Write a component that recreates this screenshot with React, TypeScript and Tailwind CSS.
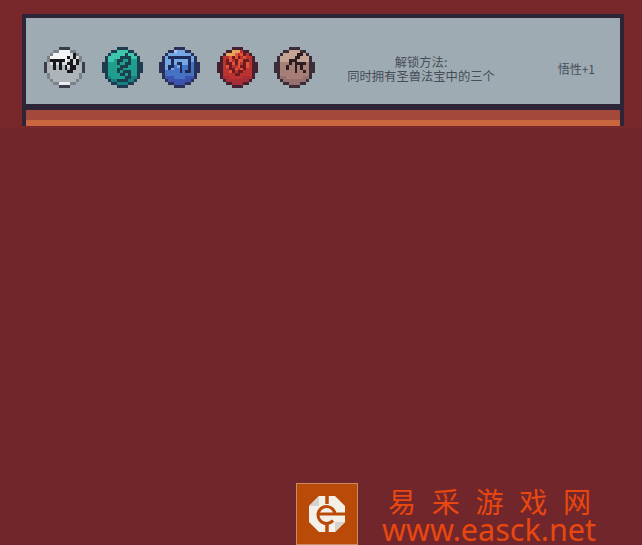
type Palette = Record<string, string>;

// 14x14 pixel maps for the five relic coins
const coins: { rows: string[]; colors: Palette }[] = [
  {
    colors: { D: '#3a3d4a', C: '#7b828a', H: '#f4f5f5', B: '#d5d9db', S: '#aeb5ba', G: '#17171c', L: '#eceeef' },
    rows: [
      '.....DDDD.....',
      '...CCHHHHCC...',
      '..CHHHHHHBGC..',
      '.CHHHHHHGBGBC.',
      '.CGGGGGHBGBGC.',
      'DSBGBGBBGGBGSD',
      'DSSGSGSGBGGSSD',
      'DSSGSGSGSGGSSD',
      'DSSSSSSSGGSSSD',
      '.CSSSSSSSSSSC.',
      '.CSSSSSSSSSSC.',
      '..CSSSSSSSSC..',
      '...CCLLLLCC...',
      '.....DDDD.....',
    ],
  },
  {
    colors: { D: '#1e3b50', H: '#3fc7ae', B: '#1f9e8e', S: '#187f80', G: '#1b3f4d' },
    rows: [
      '.....DDDD.....',
      '...DDHHHHDD...',
      '..DHHHHHGHHD..',
      '.DHHHHGGGGHHD.',
      '.DHHBGGBBGBBD.',
      'DDBBBGBBGGBBDD',
      'DDBBBBGGGBBBDD',
      'DDBBBGGBBBBBDD',
      'DDBBBGBGGGBBDD',
      '.DBBBBGGBGBBD.',
      '.DSBBBBBGGSSD.',
      '..DSSGGGGSSD..',
      '...DDSSSSDD...',
      '.....DDDD.....',
    ],
  },
  {
    colors: { D: '#2b3058', H: '#74a8e2', B: '#4672c4', S: '#3b53ae', G: '#1e2b58', L: '#a8c8ec' },
    rows: [
      '.....DDDD.....',
      '...DDLHHHDD...',
      '..DHHHHHHHHD..',
      '.DHGGGGGGGGHD.',
      '.DHHGHHHHHGHD.',
      'DDHHGHGGHHGBDD',
      'DDHGGBHGBBGBDD',
      'DDHGHBBGBBGBDD',
      'DDBBBBBGBGGBDD',
      '.DBBBBBBBBBBD.',
      '.DSSSBBBBSSSD.',
      '..DSSSSSSSSD..',
      '...DDSSSSDD...',
      '.....DDDD.....',
    ],
  },
  {
    colors: { D: '#45202e', H: '#e8a45a', B: '#bb3330', S: '#a82c36', G: '#701a22', L: '#e2553b' },
    rows: [
      '.....DDDD.....',
      '...DDHHHBDD...',
      '..DHHHLBLGBD..',
      '.DBBLGLGBLBBD.',
      '.DBGLBGLLGGBD.',
      'DDBGGLGLBGLBDD',
      'DDBLGBBLGGLBDD',
      'DDBBGGLBLGBBDD',
      'DDBBLGBGGBBBDD',
      '.DBBBBGGBBBBD.',
      '.DSSBBBBBSSSD.',
      '..DSSSSSSSSD..',
      '...DDSSSSDD...',
      '.....DDDD.....',
    ],
  },
  {
    colors: { D: '#3a2c38', H: '#c4a393', B: '#a87f76', S: '#96706e', G: '#2b1c20' },
    rows: [
      '.....DDDD.....',
      '...DDHHHHDD...',
      '..DHHHHHGGHD..',
      '.DHHHHHGGHHHD.',
      '.DHHHGGGHHHHD.',
      'DDBBBGBGGGGBDD',
      'DDBBGBBGBGBBDD',
      'DDBBGBBGBGBBDD',
      'DDBBBBBGBBGBDD',
      '.DBBBBBBBBBBD.',
      '.DSSBBBBBBSSD.',
      '..DSSSSSSSSD..',
      '...DDSSSSDD...',
      '.....DDDD.....',
    ],
  },
];

function Coin({ rows, colors }: { rows: string[]; colors: Palette }) {
  return (
    <svg width="41" height="41" viewBox="0 0 14 14" shapeRendering="crispEdges" className="shrink-0 blur-[0.5px]">
      {rows.map((row, y) =>
        row.split('').map((c, x) =>
          c === '.' ? null : <rect key={`${x}-${y}`} x={x} y={y} width="1" height="1" fill={colors[c]} />,
        ),
      )}
    </svg>
  );
}

function SiteLogo() {
  return (
    <svg width="38" height="38" viewBox="0 0 38 38">
      <path d="M11 1 H27 L37 11 V27 L27 37 H11 L1 27 V11 Z" fill="#f3efe9" />
      <path d="M1 11 L11 1 V11 Z M37 27 L27 37 V27 Z" fill="#d6d2cc" />
      <path d="M19 0 V9 M19 29 V38" stroke="#b94a08" strokeWidth="3.5" />
      <path d="M10 19 H38" stroke="#b94a08" strokeWidth="3" />
      <path d="M27 19 A8.5 8.5 0 1 0 25 25.5" fill="none" stroke="#b94a08" strokeWidth="3" />
    </svg>
  );
}

export default function App() {
  return (
    <div
      className="relative h-[545px] w-[642px] overflow-hidden bg-[#70262b]"
      style={{ fontFamily: '"Noto Sans CJK SC", "Liberation Sans", sans-serif' }}
    >
      <div className="h-[128px] bg-[#78282b] pl-[22px] pt-[14px]">
        <div className="flex h-[112px] w-[602px] flex-col bg-[#2d2438] px-[4px] pt-[4px]">
          <div className="flex h-[86px] shrink-0 items-center bg-[#9fabb3] pl-[18px] pr-[25px] pt-[13px]">
            <div className="flex gap-[16.5px]">
              {coins.map((coin, i) => (
                <Coin key={i} rows={coin.rows} colors={coin.colors} />
              ))}
            </div>
            <div className="ml-[32px] mt-[3px] w-[148px] text-center text-[12.3px] leading-[14px] text-[#454d56]">
              <p>解锁方法:</p>
              <p className="whitespace-nowrap">同时拥有圣兽法宝中的三个</p>
            </div>
            <div className="ml-auto mt-[3px] text-[12px] leading-[14px] text-[#454d56]">悟性+1</div>
          </div>
          <div className="mt-[6px] h-[10px] shrink-0 bg-[#a4483c]" />
          <div className="h-[6px] shrink-0 bg-[#c9663f]" />
        </div>
      </div>

      <div className="absolute left-[296px] top-[483px] flex h-[62px] w-[62px] items-center justify-center border border-[#c98a66] bg-[#b94a08]">
        <SiteLogo />
      </div>
      <div className="absolute left-[382px] top-[484px] w-[216px] text-[#e8480f]">
        <p className="whitespace-nowrap pl-[6px] text-[28px] leading-[34px] tracking-[15.75px]">易采游戏网</p>
        <p className="-mt-[5px] whitespace-nowrap text-[30.5px] leading-[32px]" style={{ fontFamily: '"Noto Sans", sans-serif' }}>
          www.easck.net
        </p>
      </div>
    </div>
  );
}
